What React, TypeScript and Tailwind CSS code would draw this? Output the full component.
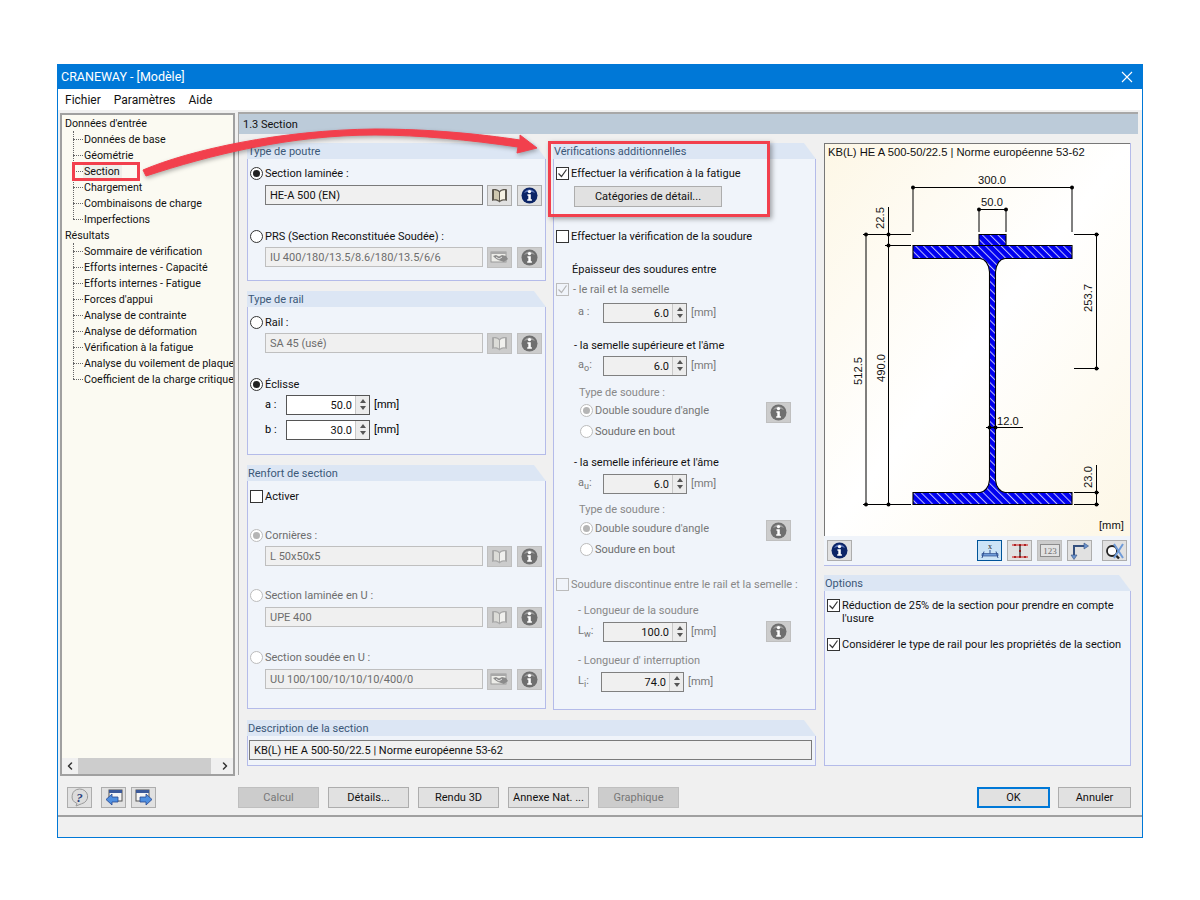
import type { ReactNode } from "react";
import { ChevronLeft, ChevronRight } from "lucide-react";

const font = "font-['Roboto',sans-serif]";

function InfoIcon({ off }: { off?: boolean }) {
  return (
    <svg width="17" height="17" viewBox="0 0 17 17">
      <circle cx="8.5" cy="8.5" r="8" fill={off ? "#6f6f6f" : "#0c2567"} />
      <path d="M3 6a6 6 0 0 1 11 0a9 5 0 0 0-11 0z" fill={off ? "#9c9c9c" : "#5a74b8"} />
      <circle cx="8.5" cy="4.6" r="1.7" fill="#fff" />
      <path d="M6.4 7.2h3.4v5h1.1v1.6H6.2v-1.6h1.1V8.8H6.4z" fill="#fff" />
    </svg>
  );
}

function BookIcon({ off }: { off?: boolean }) {
  const page = off ? "#dcdcd8" : "#cfc8b0";
  const cover = off ? "#a8a8a8" : "#5c574e";
  return (
    <svg width="17" height="15" viewBox="0 0 17 15">
      <path d="M8.5 3C6.500 1 3 .5 1 1.500V13c2.500-.8 5.500-.5 7.500 1.500C10.500 12.500 13.500 12.200 16 13V1.500C14 .5 10.500 1 8.500 3z" fill={cover} />
      <path d="M3 2.200C5 2 7 2.800 8 4.200V12.500C6.500 11.500 5 11.200 3 11.400z" fill={page} />
      <path d="M14 2.200C12 2 10 2.800 9 4.200V12.500C10.500 11.500 12 11.200 14 11.400z" fill={off ? "#f0f0ee" : "#f6f2e4"} />
    </svg>
  );
}

function SectionIcon() {
  return (
    <svg width="19" height="15" viewBox="0 0 19 15">
      <rect x="1" y="2" width="15" height="10" fill="#ecece8" stroke="#9a9a9a" />
      <rect x="1" y="2" width="15" height="2" fill="#a8a8a8" />
      <path d="M3 6l3-1 3 1.500 3-1.500 4 1 2 3-4 3-3-1-3-1-3-2z" fill="#8b8b8b" />
      <path d="M6 7l3 2 3-2" fill="none" stroke="#e8e8e8" />
    </svg>
  );
}

function HelpIcon() {
  return (
    <svg width="19" height="19" viewBox="0 0 19 19">
      <path d="M9.5 1a8 7.5 0 0 1 2 14.800L6 18l1-2.600A8 7.500 0 0 1 9.500 1z" fill="#dcdcdc" stroke="#9a9a9a" />
      <text x="9.500" y="13.500" textAnchor="middle" fontSize="13" fontWeight="700" fontStyle="italic" fill="#2b3f7d" fontFamily="'Liberation Serif',serif">?</text>
    </svg>
  );
}

function WindowArrow({ right }: { right?: boolean }) {
  return (
    <svg width="18" height="18" viewBox="0 0 18 18">
      <rect x={right ? 1 : 4} y="1" width="13" height="11" fill="#f5f5f5" stroke="#555" />
      <rect x={right ? 1 : 4} y="1" width="13" height="3" fill="#3c5a9a" />
      <path
        d={right ? "M5 8h6V5l6 5.500-6 5.500v-3H5z" : "M13 8H7V5L1 10.500 7 16v-3h6z"}
        fill="#4f8fe0"
        stroke="#27468f"
        strokeWidth="0.800"
      />
    </svg>
  );
}

function LoadIcon() {
  return (
    <svg width="20" height="18" viewBox="0 0 20 18">
      <text x="10" y="7" textAnchor="middle" fontSize="8" fontFamily="'Liberation Serif',serif" fill="#222">x</text>
      <path d="M2 11.500h16V14H2z" fill="#6f9bd8" stroke="#2f4f8f" strokeWidth="0.700" />
      <path d="M10 8v3.500M4 9.500l-2 6.500M16 9.500l2 6.500" stroke="#2f4f8f" />
    </svg>
  );
}

function DimsIcon() {
  return (
    <svg width="18" height="16" viewBox="0 0 18 16">
      <path d="M1 2h16M1 14h16" stroke="#d01010" />
      <path d="M9 2v12" stroke="#333" strokeWidth="1.400" />
      <path d="M4 1v2M9 1v2M14 1v2M4 13v2M9 13v2M14 13v2M8 8h2" stroke="#900" strokeWidth="1.400" />
    </svg>
  );
}

function ValuesIcon() {
  return (
    <svg width="20" height="13" viewBox="0 0 20 13">
      <rect x="0.500" y="0.500" width="19" height="12" fill="#e2e2e2" stroke="#8c8c8c" />
      <text x="10" y="10" textAnchor="middle" fontSize="9" fill="#6e6e6e" fontFamily="'Liberation Serif',serif">123</text>
    </svg>
  );
}

function AxesIcon() {
  return (
    <svg width="19" height="18" viewBox="0 0 19 18">
      <path d="M4 16V4h13" fill="none" stroke="#35507f" strokeWidth="2" />
      <path d="M14 1l4.500 3L14 7zM1 13l3 4.500L7 13z" fill="#6b94d0" stroke="#35507f" strokeWidth="0.600" />
    </svg>
  );
}

function ZoomOffIcon() {
  return (
    <svg width="20" height="18" viewBox="0 0 20 18">
      <circle cx="7" cy="9" r="5" fill="#fff" stroke="#222" strokeWidth="1.800" />
      <path d="M10.500 13l3.500 3.500" stroke="#222" strokeWidth="2.400" />
      <path d="M9 2l9 14M18 2L9 16" stroke="#6f9bd8" strokeWidth="2" />
    </svg>
  );
}

// Roboto sits a pixel high next to the controls, this nudges it down
function T({ children, className = "" }: { children: ReactNode; className?: string }) {
  return <span className={`pt-[2px] ${className}`}>{children}</span>;
}

function IconBtn({ off, active, children, className = "" }: { off?: boolean; active?: boolean; children: ReactNode; className?: string }) {
  const look = active
    ? "bg-[#cce4f7] border-[#005499]"
    : off
      ? "bg-[#cccccc] border-[#bfbfbf]"
      : "bg-[#e1e1e1] border-[#adadad]";
  return (
    <div className={`w-[25px] h-[21px] shrink-0 flex items-center justify-center border ${look} ${className}`}>
      {children}
    </div>
  );
}

function Radio({ on, off }: { on?: boolean; off?: boolean }) {
  return (
    <span
      className={`w-[13px] h-[13px] shrink-0 rounded-full border flex items-center justify-center bg-white ${off ? "border-[#bcbcbc]" : "border-[#333]"}`}
    >
      {on && <span className={`w-[7px] h-[7px] rounded-full ${off ? "bg-[#b5b5b5]" : "bg-[#222]"}`} />}
    </span>
  );
}

function Check({ on, off }: { on?: boolean; off?: boolean }) {
  return (
    <span className={`w-[13px] h-[13px] shrink-0 border flex items-center justify-center ${off ? "border-[#bcbcbc]" : "border-[#333] bg-white"}`}>
      {on && (
        <svg width="11" height="11" viewBox="0 0 11 11">
          <path d="M1.500 5.500l3 3 5-7" fill="none" stroke={off ? "#b5b5b5" : "#333"} strokeWidth="1.200" />
        </svg>
      )}
    </span>
  );
}

function GroupBox({ title, bodyClass, className = "", children }: { title: string; bodyClass: string; className?: string; children?: ReactNode }) {
  return (
    <section className={className}>
      <div className="h-4 pl-[1px] bg-[#dce6f4] text-[#3b5878] leading-[18px] [clip-path:polygon(0_0,calc(100%_-_12px)_0,100%_100%,0_100%)]">
        {title}
      </div>
      <div className={`bg-[#f0f4fa] border-x border-b border-[#b4bbe9] ${bodyClass}`}>{children}</div>
    </section>
  );
}

function RadioRow({ label, on, off, className = "" }: { label: string; on?: boolean; off?: boolean; className?: string }) {
  return (
    <div className={`h-4 flex items-center pl-[2px] gap-[2px] ${off ? "text-[#6d6d6d]" : "text-[#111]"} ${className}`}>
      <Radio on={on} off={off} />
      <T>{label}</T>
    </div>
  );
}

function FieldRow({ value, off, book, className = "" }: { value: string; off?: boolean; book?: boolean; className?: string }) {
  return (
    <div className={`h-[21px] flex items-start pl-[17px] ${className}`}>
      <div className={`w-[218px] h-5 bg-[#f0f0f0] border px-1 leading-[20px] ${off ? "border-[#bfbfbf] text-[#6d6d6d]" : "border-[#7a7a7a] text-[#111]"}`}>
        {value}
      </div>
      <IconBtn off={off} className="ml-1">
        {book ? <BookIcon off={off} /> : <SectionIcon />}
      </IconBtn>
      <IconBtn off={off} className="ml-[5px]">
        <InfoIcon off={off} />
      </IconBtn>
    </div>
  );
}

function Spin({ value, white, width = "w-[84px]" }: { value: string; white?: boolean; width?: string }) {
  return (
    <div className={`${width} h-5 flex border ${white ? "bg-white border-[#555]" : "bg-[#f0f0f0] border-[#808080]"}`}>
      <span className="flex-1 text-right pr-[3px] leading-[20px] text-[#111]">{value}</span>
      <span className="w-[14px] flex flex-col items-center justify-center gap-[3px] bg-[#ececec] border-l border-[#c8c8c8]">
        <span className="w-0 h-0 border-x-[3.5px] border-x-transparent border-b-[4px] border-b-[#555]" />
        <span className="w-0 h-0 border-x-[3.5px] border-x-transparent border-t-[4px] border-t-[#555]" />
      </span>
    </div>
  );
}

function SpinRow({ label, value, labelWidth = "w-[25px]", width, className = "", children }: { label: ReactNode; value: string; labelWidth?: string; width?: string; className?: string; children?: ReactNode }) {
  return (
    <div className={`h-[21px] flex items-center pl-[24px] text-[#777] ${className}`}>
      <span className={`${labelWidth} shrink-0`}>{label}</span>
      <Spin value={value} width={width} />
      <T className="ml-1">[mm]</T>
      {children}
    </div>
  );
}

function Tree() {
  const inputs = ["Données de base", "Géométrie", "Section", "Chargement", "Combinaisons de charge", "Imperfections"];
  const results = [
    "Sommaire de vérification",
    "Efforts internes - Capacité",
    "Efforts internes - Fatigue",
    "Forces d'appui",
    "Analyse de contrainte",
    "Analyse de déformation",
    "Vérification à la fatigue",
    "Analyse du voilement de plaque",
    "Coefficient de la charge critique",
  ];
  const branch = (items: string[]) => (
    <div className="relative ml-[8px]">
      <span className="absolute left-0 top-0 bottom-[8px] border-l border-dotted border-[#666]" />
      {items.map((t) => (
        <div key={t} className="h-4 flex items-center whitespace-nowrap">
          <span className="w-[10px] shrink-0 border-b border-dotted border-[#666]" />
          <span className={`pl-[1px] pr-[2px] pt-[2px] ${t === "Section" ? "bg-[#efefe9]" : ""}`}>{t}</span>
        </div>
      ))}
    </div>
  );
  return (
    <aside className="w-[175px] h-full border-2 border-[#a0a0a0] bg-[#fbfaf2] flex flex-col text-[#111] text-[10.7px]">
      <div className="flex-1 overflow-hidden pl-[3px]">
        <div className="h-4 leading-[18px]">Données d'entrée</div>
        {branch(inputs)}
        <div className="h-4 leading-[18px]">Résultats</div>
        {branch(results)}
      </div>
      <div className="h-[16px] bg-[#f0f0f0] flex items-center text-[#333]">
        <ChevronLeft size={12} strokeWidth={3} className="w-4 shrink-0" />
        <div className="w-[133px] h-full bg-[#cdcdcd]" />
        <ChevronRight size={12} strokeWidth={3} className="ml-auto mr-[2px]" />
      </div>
    </aside>
  );
}

function Drawing() {
  const dots: [number, number][] = [
    [913, 187.500], [1072, 187.500], [979, 209.500], [1006, 209.500],
    [866, 234.500], [888.500, 234.500], [888.500, 245.500], [1096.500, 234.500], [1096.500, 368.500],
    [866, 504.500], [888.500, 504.500], [989.500, 427.500], [995.500, 427.500],
    [1096.500, 492.500], [1096.500, 504.500],
  ];
  const section =
    "M979 234.500H1006V245.500H1072V258.500H1005C1000 259 996 264 995.500 272V480C996 487 1000 492 1005 492.500H1072V504.500H913V492.500H980C985 492 989 487 989.500 480V272C989 264 985 259 980 258.500H913V245.500H979Z";
  return (
    <svg className="absolute inset-0" width="306" height="392" viewBox="825 144 306 392" fontFamily="'Liberation Sans',sans-serif" fontSize="11.200" fill="#111">
      <defs>
        <pattern id="hatch" width="5.500" height="5.500" patternUnits="userSpaceOnUse" patternTransform="rotate(-45)">
          <rect width="5.500" height="5.500" fill="#0000f0" />
          <rect x="0" width="1" height="5.500" fill="#ffffff" opacity="0.750" />
        </pattern>
      </defs>
      <path d={section} fill="url(#hatch)" stroke="#000" strokeWidth="1.100" />
      <path d="M979 245.500H1006" stroke="#000" />
      <path
        d="M913 187.500H1072M913 187.500V232M1072 187.500V232M979 209.500H1006M979 209.500V232M1006 209.500V232M863 234.500H911M885 245.500H911M863 504.500H911M866 234.500V504.500M888.500 207V504.500M1074 234.500H1099M1074 368.500H1099M1096.500 234.500V368.500M986 427.500H1023M1074 492.500H1099M1074 504.500H1099M1096.500 465V504.500"
        stroke="#000"
        fill="none"
      />
      {dots.map(([x, y]) => (
        <circle key={`${x}-${y}`} cx={x} cy={y} r="2" fill="#000" />
      ))}
      <text x="992" y="184" textAnchor="middle">300.0</text>
      <text x="992" y="206" textAnchor="middle">50.0</text>
      <text x="997" y="425">12.0</text>
      <text transform="translate(884 218) rotate(-90)" textAnchor="middle">22.5</text>
      <text transform="translate(862 371) rotate(-90)" textAnchor="middle">512.5</text>
      <text transform="translate(885 368) rotate(-90)" textAnchor="middle">490.0</text>
      <text transform="translate(1092 298) rotate(-90)" textAnchor="middle">253.7</text>
      <text transform="translate(1092 477) rotate(-90)" textAnchor="middle">23.0</text>
      <text x="1099" y="529">[mm]</text>
    </svg>
  );
}

function FootBtn({ label, off, wide, className = "" }: { label: string; off?: boolean; wide?: boolean; className?: string }) {
  const look = off
    ? "bg-[#cccccc] border-[#bfbfbf] text-[#777]"
    : wide
      ? "bg-[#e1e1e1] border-[#0078d7] border-2 text-[#111]"
      : "bg-[#e1e1e1] border-[#adadad] text-[#111]";
  return (
    <div className={`h-[21px] flex items-center justify-center border whitespace-nowrap ${look} ${className}`}>
      <T>{label}</T>
    </div>
  );
}

export default function App() {
  return (
    <div className={`relative w-[1200px] h-[900px] bg-white pt-[64px] pl-[57px] text-[11px] ${font}`}>
      <div className="w-[1086px] h-[774px] border border-[#0078d7] bg-[#f0f0f0] flex flex-col">
        <header className="h-[24px] bg-[#0078d7] text-white text-[12.5px] flex items-center pl-[3px] pr-[9px] justify-between">
          <span>CRANEWAY - [Modèle]</span>
          <svg width="12" height="12" viewBox="0 0 12 12">
            <path d="M1 1l10 10M11 1L1 11" stroke="#fff" strokeWidth="1.100" />
          </svg>
        </header>
        <nav className="h-[21px] bg-white flex items-center pl-[7px] gap-[13px] text-[12px] text-[#111]">
          <span>Fichier</span>
          <span>Paramètres</span>
          <span>Aide</span>
        </nav>

        <div className="h-[666px] flex pt-[3px] pl-[2px] gap-[3px]">
          <Tree />
          <main className="w-[900px] h-full border-t-2 border-l border-[#a8a8a8] border-b-0 -mt-[1px] flex flex-col">
            <div className="h-5 shrink-0 bg-[#bccbd9] pl-[4px] leading-[22px] text-[#111]">1.3 Section</div>
            <div className="flex gap-2 pl-[8px] pt-[9px]">
              <div className="w-[569px] flex flex-col gap-[10px]">
                <div className="flex gap-[7px]">
                  <div className="w-[299px] flex flex-col gap-[10px]">
                    <GroupBox title="Type de poutre" bodyClass="h-[122px] pt-[6px]">
                      <RadioRow label="Section laminée :" on />
                      <FieldRow value="HE-A 500 (EN)" book className="mt-[4px]" />
                      <RadioRow label="PRS (Section Reconstituée Soudée) :" className="mt-[22px]" />
                      <FieldRow value="IU 400/180/13.5/8.6/180/13.5/6/6" off className="mt-[3px]" />
                    </GroupBox>
                    <GroupBox title="Type de rail" bodyClass="h-[148px] pt-[7px]">
                      <RadioRow label="Rail :" />
                      <FieldRow value="SA 45 (usé)" off book className="mt-[3px]" />
                      <RadioRow label="Éclisse" on className="mt-[22px]" />
                      <div className="h-[21px] mt-[2px] flex items-center pl-[17px]">
                        <T className="w-[21px]">a :</T>
                        <Spin value="50.0" white />
                        <T className="ml-1">[mm]</T>
                      </div>
                      <div className="h-[21px] mt-[4px] flex items-center pl-[17px]">
                        <T className="w-[21px]">b :</T>
                        <Spin value="30.0" white />
                        <T className="ml-1">[mm]</T>
                      </div>
                    </GroupBox>
                    <GroupBox title="Renfort de section" bodyClass="h-[228px] pt-[7px]">
                      <div className="h-4 flex items-center pl-[2px] gap-[2px] text-[#111]">
                        <Check />
                        <T>Activer</T>
                      </div>
                      <RadioRow label="Cornières :" on off className="mt-[23px]" />
                      <FieldRow value="L 50x50x5" off book className="mt-[3px]" />
                      <RadioRow label="Section laminée en U :" off className="mt-[20px]" />
                      <FieldRow value="UPE 400" off book className="mt-[4px]" />
                      <RadioRow label="Section soudée en U :" off className="mt-[21px]" />
                      <FieldRow value="UU 100/100/10/10/10/400/0" off className="mt-[4px]" />
                    </GroupBox>
                  </div>

                  <GroupBox title="Vérifications additionnelles" className="w-[263px]" bodyClass="h-[551px] pt-[6px]">
                    <div className="h-4 flex items-center pl-[2px] gap-[2px] text-[#111]">
                      <Check on />
                      <T>Effectuer la vérification à la fatigue</T>
                    </div>
                    <div className="ml-[20px] mt-[5px] w-[148px] h-[21px] flex items-center justify-center bg-[#e1e1e1] border border-[#adadad] text-[#111]">
                      <T>Catégories de détail...</T>
                    </div>
                    <div className="h-4 mt-[21px] flex items-center pl-[2px] gap-[2px] text-[#111]">
                      <Check />
                      <T>Effectuer la vérification de la soudure</T>
                    </div>
                    <div className="h-4 mt-[17px] pl-[18px] leading-[18px] text-[#111]">Épaisseur des soudures entre</div>
                    <div className="h-4 mt-[4px] flex items-center pl-[2px] gap-[4px] text-[#777]">
                      <Check on off />
                      <T>- le rail et la semelle</T>
                    </div>
                    <SpinRow label="a :" value="6.0" className="mt-[5px]" />
                    <div className="h-4 mt-[14px] pl-[20px] leading-[18px] text-[#111]">- la semelle supérieure et l'âme</div>
                    <SpinRow label={<>a<sub className="text-[9px]">o</sub>:</>} value="6.0" className="mt-[2px]" />
                    <div className="h-4 mt-[8px] pl-[25px] leading-[18px] text-[#888]">Type de soudure :</div>
                    <div className="h-[23px] flex items-start pl-[26px] text-[#777]">
                      <div className="h-[21px] flex items-center gap-[2px]">
                        <Radio on off />
                        <T>Double soudure d'angle</T>
                      </div>
                      <IconBtn off className="mt-[2px] ml-auto mr-[24px]">
                        <InfoIcon off />
                      </IconBtn>
                    </div>
                    <RadioRow label="Soudure en bout" off className="pl-[26px]" />
                    <div className="h-4 mt-[15px] pl-[20px] leading-[18px] text-[#111]">- la semelle inférieure et l'âme</div>
                    <SpinRow label={<>a<sub className="text-[9px]">u</sub>:</>} value="6.0" className="mt-[3px]" />
                    <div className="h-4 mt-[7px] pl-[25px] leading-[18px] text-[#888]">Type de soudure :</div>
                    <div className="h-[23px] mt-[1px] flex items-start pl-[26px] text-[#777]">
                      <div className="h-[21px] flex items-center gap-[2px]">
                        <Radio on off />
                        <T>Double soudure d'angle</T>
                      </div>
                      <IconBtn off className="mt-[2px] ml-auto mr-[24px]">
                        <InfoIcon off />
                      </IconBtn>
                    </div>
                    <RadioRow label="Soudure en bout" off className="pl-[26px]" />
                    <div className="h-4 mt-[19px] flex items-center pl-[2px] gap-[2px] text-[#888]">
                      <Check off />
                      <T>Soudure discontinue entre le rail et la semelle :</T>
                    </div>
                    <div className="h-4 mt-[10px] pl-[24px] leading-[18px] text-[#888]">- Longueur de la soudure</div>
                    <SpinRow label={<>L<sub className="text-[9px]">w</sub>:</>} value="100.0" className="mt-[3px]">
                      <IconBtn off className="ml-auto mr-[24px]">
                        <InfoIcon off />
                      </IconBtn>
                    </SpinRow>
                    <div className="h-4 mt-[10px] pl-[24px] leading-[18px] text-[#888]">- Longueur d' interruption</div>
                    <SpinRow label={<>L<sub className="text-[9px]">i</sub>:</>} value="74.0" labelWidth="w-[23px]" width="w-[83px]" className="mt-[3px]" />
                  </GroupBox>
                </div>

                <GroupBox title="Description de la section" bodyClass="h-[30px] pt-[4px] pl-[1px]">
                  <div className="w-[563px] h-5 bg-[#f0f0f0] border border-[#7a7a7a] px-1 leading-[20px] text-[#111]">
                    KB(L) HE A 500-50/22.5 | Norme européenne 53-62
                  </div>
                </GroupBox>
              </div>

              <div className="w-[307px] flex flex-col gap-[9px]">
                <section className="border-r border-b border-[#b4bbe9] bg-[#f0f4fa]">
                  <div className="relative h-[393px] border-t border-l border-[#777] bg-linear-to-br from-[#fdf7e6] via-white to-[#fdf7e6] font-['Liberation_Sans',sans-serif] text-[11.2px] text-[#111] pl-[3px] pt-[1px]">
                    <div className="leading-[15px]">KB(L) HE A 500-50/22.5 | Norme européenne 53-62</div>
                    <Drawing />
                  </div>
                  <div className="h-[29px] flex items-start pt-[4px] pl-[3px]">
                    <IconBtn><InfoIcon /></IconBtn>
                    <IconBtn active className="ml-[125px]"><LoadIcon /></IconBtn>
                    <IconBtn className="ml-[5px]"><DimsIcon /></IconBtn>
                    <IconBtn off className="ml-[5px]"><ValuesIcon /></IconBtn>
                    <IconBtn className="ml-[5px]"><AxesIcon /></IconBtn>
                    <IconBtn className="ml-[10px]"><ZoomOffIcon /></IconBtn>
                  </div>
                </section>
                <GroupBox title="Options" bodyClass="h-[175px] pt-[6px]">
                  <div className="flex pl-[2px] gap-[2px] text-[#111] leading-[13px]">
                    <span className="mt-[2px] h-[13px] flex"><Check on /></span>
                    <span className="w-[285px] pt-[2px]">Réduction de 25% de la section pour prendre en compte l'usure</span>
                  </div>
                  <div className="flex items-center h-4 mt-[11px] pl-[2px] gap-[2px] text-[#111]">
                    <Check on />
                    <T>Considérer le type de rail pour les propriétés de la section</T>
                  </div>
                </GroupBox>
              </div>
            </div>
          </main>
        </div>

        <footer className="h-[39px] flex items-start pt-[11px] pl-[9px]">
          <IconBtn><HelpIcon /></IconBtn>
          <IconBtn className="ml-[9px]"><WindowArrow /></IconBtn>
          <IconBtn className="ml-[5px]"><WindowArrow right /></IconBtn>
          <FootBtn label="Calcul" off className="w-[81px] ml-[82px]" />
          <FootBtn label="Détails..." className="w-[81px] ml-[9px]" />
          <FootBtn label="Rendu 3D" className="w-[81px] ml-[9px]" />
          <FootBtn label="Annexe Nat. ..." className="w-[81px] ml-[9px]" />
          <FootBtn label="Graphique" off className="w-[81px] ml-[9px]" />
          <FootBtn label="OK" wide className="w-[73px] ml-[298px]" />
          <FootBtn label="Annuler" className="w-[73px] ml-[8px]" />
        </footer>
        <div className="h-[22px] border-t-2 border-[#a0a0a0]" />
      </div>

      {/* annotations over the dialog */}
      <div className="absolute left-[72px] top-[162px] w-[68px] h-[19px] border-[3px] border-[#f2404d]" />
      <div className="absolute left-[548px] top-[141px] w-[222px] h-[76px] border-[3px] border-[#f2404d] shadow-[2px_2px_5px_rgba(0,0,0,0.35)]" />
      <svg className="absolute left-0 top-0 drop-shadow-[1px_2px_2px_rgba(0,0,0,0.3)]" width="600" height="200" viewBox="0 0 600 200">
        <path
          d="M143 170C190 150 280 130 375 129C430 129 480 134 520 140L520 135L537 148L517 153L518 147C470 140 420 135 375 135C290 135 210 155 146 176Z"
          fill="#f2404d"
          stroke="#f2404d"
          strokeLinejoin="round"
        />
      </svg>
    </div>
  );
}
